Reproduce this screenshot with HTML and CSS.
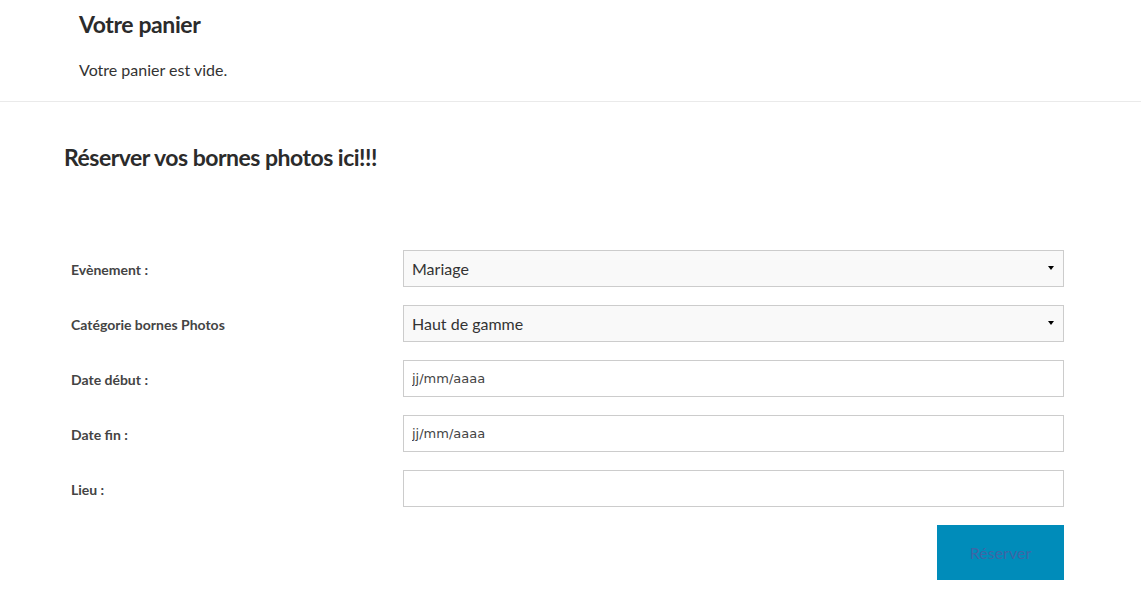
FILE: index.html
```html
<!DOCTYPE html>
<html lang="fr">

<head>
    <meta charset="UTF-8">
    <meta name="viewport" content="width=device-width, initial-scale=1.0">
    <title>Réservation</title>
    <link rel="stylesheet" href="styles.css">
</head>

<body>
    <div class="cart">
        <h2 class="cart-title">Votre panier</h2>
        <p class="cart-empty">Votre panier est vide.</p>
    </div>

    <div class="booking">
        <h2 class="booking-title">Réserver vos bornes photos ici!!!</h2>

        <form class="booking-form">
            <div class="row">
                <label>Evènement :</label>
                <div class="select">
                    <select>
                        <option>Mariage</option>
                    </select>
                </div>
            </div>
            <div class="row">
                <label>Catégorie bornes Photos</label>
                <div class="select">
                    <select>
                        <option>Haut de gamme</option>
                    </select>
                </div>
            </div>
            <div class="row">
                <label>Date début :</label>
                <input class="field date" type="text" placeholder="jj/mm/aaaa">
            </div>
            <div class="row">
                <label>Date fin :</label>
                <input class="field date" type="text" placeholder="jj/mm/aaaa">
            </div>
            <div class="row">
                <label>Lieu :</label>
                <input class="field" type="text">
            </div>
            <div class="actions">
                <button type="button" class="btn">Réserver</button>
            </div>
        </form>
    </div>
</body>

</html>
```

FILE: styles.css
```css
* {
    margin: 0;
    padding: 0;
    box-sizing: border-box;
}

body {
    font-family: Lato, "Open Sans", sans-serif;
    color: #333;
    background: #fff;
}

.cart {
    padding: 10px 79px 0;
    height: 102px;
    border-bottom: 1px solid #eaeaea;
}

.cart-title {
    font-size: 23px;
    font-weight: 700;
    color: #2b2b2b;
    line-height: 28px;
    letter-spacing: -0.4px;
}

.cart-empty {
    margin-top: 22px;
    font-size: 16px;
    line-height: 20px;
}

.booking {
    padding: 41px 77px 0 64px;
}

.booking-title {
    font-size: 23px;
    font-weight: 700;
    color: #2b2b2b;
    line-height: 29px;
    letter-spacing: -0.5px;
}

.booking-form {
    margin-top: 78px;
    padding-left: 7px;
}

.row {
    display: flex;
    align-items: center;
    height: 37px;
    margin-bottom: 18px;
}

.row label {
    width: 332px;
    padding-top: 2px;
    font-size: 14px;
    font-weight: 700;
    color: #444;
}

.select {
    position: relative;
    flex: 1;
}

.select::after {
    content: "";
    position: absolute;
    right: 10px;
    top: 16px;
    border-left: 3px solid transparent;
    border-right: 3px solid transparent;
    border-top: 4px solid #000;
}

.select select,
.field {
    display: block;
    width: 100%;
    height: 37px;
    border: 1px solid #ccc;
    border-radius: 0;
    font-family: Lato, sans-serif;
    font-size: 16px;
    color: #333;
    padding: 0 8px;
    outline: none;
}

.select select {
    appearance: none;
    -webkit-appearance: none;
    background: #f9f9f9;
}

.field {
    flex: 1;
    background: #fff;
}

.field.date {
    font-family: "DejaVu Sans", sans-serif;
    font-size: 13px;
}

.field.date::placeholder {
    color: #444;
}

.actions {
    display: flex;
    justify-content: flex-end;
}

.btn {
    width: 127px;
    height: 55px;
    border: none;
    background: #008cba;
    color: #3e66a6;
    font-family: Lato, sans-serif;
    font-size: 16px;
}
```
